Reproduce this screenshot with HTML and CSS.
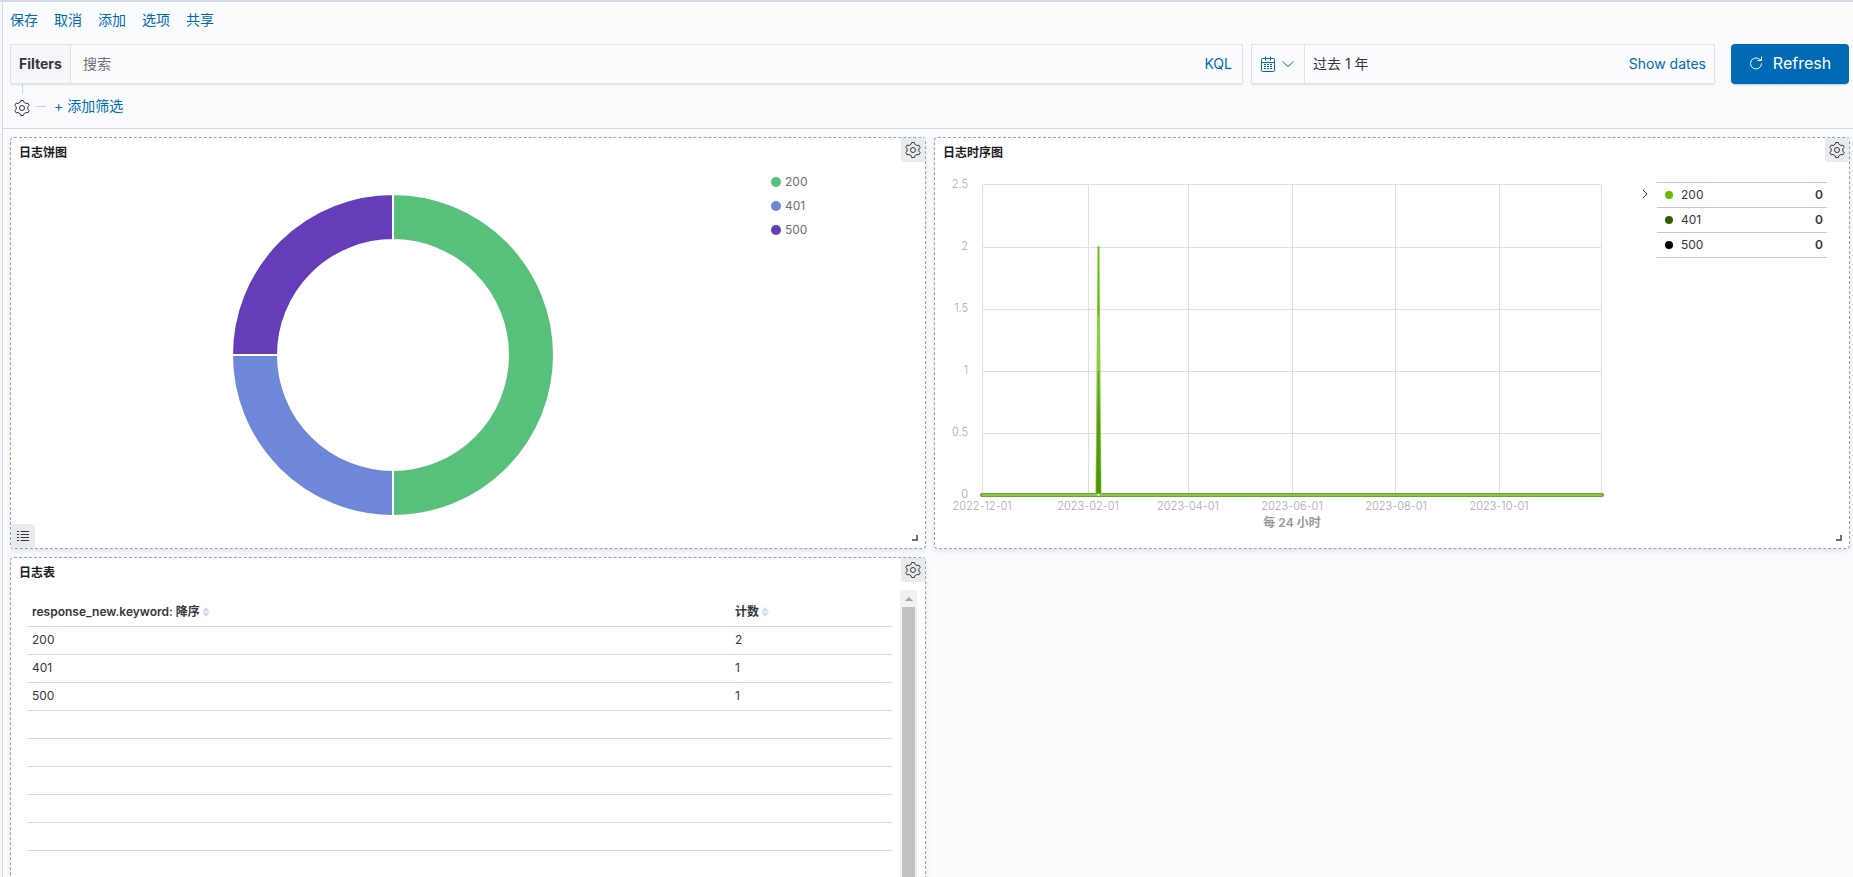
FILE: index.html
```html
<!DOCTYPE html>
<html lang="zh-CN">
<head>
<meta charset="utf-8">
<title>日志仪表板</title>
<link rel="stylesheet" href="styles.css">
</head>
<body>
<svg class="sprite" aria-hidden="true">
  <symbol id="gear" viewBox="-8 -8 16 16">
    <path d="M-1.9-5.7-1.3-7.5H1.3L1.9-5.7Q2.9-5.3 3.9-4.45L5.85-4.88 7.15-2.62 5.8-1.15Q6 0 5.8 1.15L7.15 2.62 5.85 4.88 3.9 4.45Q2.9 5.3 1.9 5.7L1.3 7.5H-1.3L-1.9 5.7Q-2.9 5.3-3.9 4.45L-5.85 4.88-7.15 2.62-5.8 1.15Q-6 0-5.8-1.15L-7.15-2.62-5.85-4.88-3.9-4.45Q-2.9-5.3-1.9-5.7Z"/>
    <circle r="2.5"/>
  </symbol>
</svg>
<div class="app">
  <div class="rail"></div>
  <main class="main">
    <header class="top">
      <nav class="menu">
        <button>保存</button><button>取消</button><button>添加</button><button>选项</button><button>共享</button>
      </nav>
      <div class="query-row">
        <div class="query">
          <button class="filters-btn">Filters</button>
          <input class="search" type="text" placeholder="搜索" aria-label="搜索">
          <button class="kql">KQL</button>
        </div>
        <div class="dates">
          <button class="quick" aria-label="日期快速选择">
            <svg class="stroke" width="14" height="16" viewBox="0 0 14 16"><rect x="0.5" y="2.5" width="13" height="13" rx="1"/><path d="M.5 6.500h13M4.500.5v4M9.500.5v4"/><path d="M3 8.500h8M3 10.500h8M3 12.500h8" stroke-dasharray="2 1"/></svg>
            <svg class="stroke" width="14" height="14" viewBox="0 0 14 14"><path d="M1.500 4.500 7 9.500l5.500-5"/></svg>
          </button>
          <button class="range">过去 1 年</button>
          <button class="show-dates">Show dates</button>
        </div>
        <button class="refresh">
          <svg class="stroke" width="14" height="14" viewBox="0 0 14 14"><path d="M12.500 7.500A5.500 5.500 0 1 1 10.500 3.200L12.500 4.500M12.500.5v4h-4"/></svg>
          Refresh
        </button>
      </div>
      <div class="filter-row">
        <div class="filter-options"><button class="gear" aria-label="筛选选项"><svg class="stroke" width="16" height="16"><use href="#gear"/></svg></button></div>
        <span class="dash"></span>
        <button class="add-filter">+ 添加筛选</button>
      </div>
    </header>

    <div class="grid">
      <section class="panel">
        <h2>日志饼图</h2>
        <button class="gear panel-gear" aria-label="面板选项"><svg class="stroke" width="16" height="16"><use href="#gear"/></svg></button>
        <div class="panel-body">
          <svg class="chart" viewBox="0 0 756 378" role="img" aria-label="日志饼图">
            <g class="slices">
              <path fill="#57c17b" d="M382 28A161 161 0 0 1 382 350V304A115 115 0 0 0 382 74Z"/>
              <path fill="#6f87d8" d="M382 350A161 161 0 0 1 221 189H267A115 115 0 0 0 382 304Z"/>
              <path fill="#663db8" d="M221 189A161 161 0 0 1 382 28V74A115 115 0 0 0 267 189Z"/>
            </g>
          </svg>
          <ul class="pie-legend">
            <li><i class="dot c-green"></i>200</li>
            <li><i class="dot c-blue"></i>401</li>
            <li><i class="dot c-purple"></i>500</li>
          </ul>
        </div>
        <button class="list-toggle" aria-label="切换图例"><svg class="stroke" width="14" height="14" viewBox="0 0 14 14"><path d="M1 2.500h2M4.500 2.500h8.500M1 5.500h2M4.500 5.500h8.500M1 8.500h2M4.500 8.500h8.500M1 11.500h2M4.500 11.500h8.500"/></svg></button>
        <span class="resize"></span>
      </section>

      <section class="panel">
        <h2>日志时序图</h2>
        <button class="gear panel-gear" aria-label="面板选项"><svg class="stroke" width="16" height="16"><use href="#gear"/></svg></button>
        <div class="panel-body">
          <svg class="chart" viewBox="0 0 700 378" role="img" aria-label="日志时序图">
            <path class="gridlines" d="M47.500 18.500H666.500M47.500 81.500H666.500M47.500 143.500H666.500M47.500 205.500H666.500M47.500 267.500H666.500M47.500 18.500V328M153.500 18.500V328M253.500 18.500V328M357.500 18.500V328M460.500 18.500V328M564.500 18.500V328M666.500 18.500V328"/>
            <g class="axis y-axis">
              <text x="33" y="22">2.5</text><text x="33" y="84">2</text><text x="33" y="146">1.5</text><text x="33" y="208">1</text><text x="33" y="270">0.5</text><text x="33" y="332">0</text>
            </g>
            <g class="axis x-axis">
              <text x="47" y="344">2022-12-01</text><text x="153" y="344">2023-02-01</text><text x="253" y="344">2023-04-01</text><text x="357" y="344">2023-06-01</text><text x="461" y="344">2023-08-01</text><text x="564" y="344">2023-10-01</text>
              <text class="axis-title" x="357" y="361">每 24 小时</text>
            </g>
            <path d="M47 329H667" stroke="#6f9f3c" stroke-width="4" stroke-linecap="round"/>
            <path d="M47 329H667" stroke="#88c940" stroke-width="2"/>
            <path d="M161.500 328 163.500 82 165.500 328Z" fill="#8ccc45" stroke="#8ccc45" stroke-width="2" stroke-linejoin="round"/>
            <path d="M163.500 82V150" stroke="#68bc00"/>
            <path d="M161.500 327 163.500 205 165.500 327Z" fill="#4d940b" stroke="#5aa012" stroke-linejoin="round"/>
            <circle cx="163.500" cy="81.500" r="1.500" fill="#8ccc45"/>
            <circle cx="163.500" cy="329" r="1" fill="#fff"/>
          </svg>
          <div class="series">
            <button class="collapse" aria-label="折叠图例"><svg class="stroke" width="8" height="10" viewBox="0 0 8 10"><path d="M2 1l4 4-4 4"/></svg></button>
            <ul class="series-list">
              <li><i class="dot small c-lime"></i><span>200</span><b>0</b></li>
              <li><i class="dot small c-forest"></i><span>401</span><b>0</b></li>
              <li><i class="dot small c-black"></i><span>500</span><b>0</b></li>
            </ul>
          </div>
        </div>
        <span class="resize"></span>
      </section>

      <section class="panel">
        <h2>日志表</h2>
        <button class="gear panel-gear" aria-label="面板选项"><svg class="stroke" width="16" height="16"><use href="#gear"/></svg></button>
        <div class="panel-body table-body">
          <table>
            <colgroup><col class="col-key"><col></colgroup>
            <thead><tr>
              <th>response_new.keyword: 降序<svg class="sort" width="8" height="10" viewBox="0 0 8 10"><path d="M4 0 8 4.500H0ZM0 5.500H8L4 10Z"/></svg></th>
              <th>计数<svg class="sort" width="8" height="10" viewBox="0 0 8 10"><path d="M4 0 8 4.500H0ZM0 5.500H8L4 10Z"/></svg></th>
            </tr></thead>
            <tbody>
              <tr><td>200</td><td>2</td></tr>
              <tr><td>401</td><td>1</td></tr>
              <tr><td>500</td><td>1</td></tr>
              <tr><td></td><td></td></tr>
              <tr><td></td><td></td></tr>
              <tr><td></td><td></td></tr>
              <tr><td></td><td></td></tr>
              <tr><td></td><td></td></tr>
              <tr><td></td><td></td></tr>
              <tr><td></td><td></td></tr>
            </tbody>
          </table>
          <div class="scrollbar"><span class="arrow"></span><span class="thumb"></span></div>
        </div>
      </section>
    </div>
  </main>
</div>
</body>
</html>
```
FILE: styles.css
```css
* { box-sizing: border-box; }
body {
  margin: 0;
  height: 100vh;
  overflow: hidden;
  background: #fafbfd;
  color: #343741;
  font: 14px/20px Inter, "Noto Sans CJK SC", sans-serif;
}
button {
  padding: 0;
  border: 0;
  background: none;
  color: #006bb4;
  font: inherit;
  white-space: nowrap;
}
ul { margin: 0; padding: 0; list-style: none; }
svg { display: block; }
.sprite { position: absolute; width: 0; height: 0; }
.stroke { fill: none; stroke: currentColor; stroke-linejoin: round; }

.app { display: flex; height: 100%; border-top: 2px solid #d3dae6; overflow: hidden; }
.rail { flex: none; width: 3px; border-right: 1px solid #d3dae6; background: #f5f7fa; }
.main { flex: 1; min-width: 0; }

.top { padding: 8px 4px 0 7px; border-bottom: 1px solid #d3dae6; }
.menu { display: flex; gap: 16px; }
.query-row { display: flex; gap: 8px; margin-top: 14px; }
.query, .dates {
  display: flex;
  align-items: stretch;
  height: 40px;
  border: 1px solid #dfe1e6;
  background: #fbfcfd;
  box-shadow: 0 2px 2px -1px rgba(152, 162, 179, 0.3);
}
.query { flex: 1; min-width: 0; }
.filters-btn {
  padding: 0 8px;
  border-right: 1px solid #dfe1e6;
  background: #f5f7fa;
  color: #343741;
  font-weight: 700;
}
.search {
  flex: 1;
  min-width: 0;
  padding: 0 12px;
  border: 0;
  background: none;
  color: #343741;
  font: inherit;
}
.search::placeholder { color: #69707d; opacity: 1; }
.kql { padding: 0 10px; }
.dates { width: 464px; }
.quick {
  display: flex;
  align-items: center;
  gap: 6px;
  width: 53px;
  padding-left: 9px;
  border-right: 1px solid #dfe1e6;
}
.range { flex: 1; padding-left: 8px; color: #343741; text-align: left; }
.show-dates { padding-right: 8px; }
.refresh {
  display: flex;
  align-items: center;
  justify-content: center;
  gap: 10px;
  width: 118px;
  height: 40px;
  margin-left: 8px;
  padding-bottom: 2px;
  border-radius: 4px;
  background: #006bb4;
  color: #fff;
  font-size: 16px;
  box-shadow: 0 2px 2px -1px rgba(54, 97, 126, 0.3);
}

.filter-row { display: flex; align-items: center; height: 44px; padding-left: 4px; }
.filter-options {
  display: flex;
  flex-direction: column;
  align-items: center;
  align-self: stretch;
}
.filter-options::before {
  content: "";
  width: 1px;
  height: 10px;
  margin-bottom: 6px;
  background: #c9d2e0;
}
.gear { display: flex; align-items: center; justify-content: center; color: #343741; }
.dash { width: 10px; height: 1px; margin: 0 8px 0 6px; background: #c9d2e0; }

.grid {
  display: grid;
  grid-template-columns: 1fr 1fr;
  grid-auto-rows: minmax(412px, auto);
  gap: 8px;
  padding: 8px 3px 8px 7px;
}
.panel {
  position: relative;
  display: flex;
  flex-direction: column;
  min-width: 0;
  border: 1px dashed #98a2b3;
  border-radius: 4px;
  background: #fff;
  box-shadow: 0 2px 4px rgba(152, 162, 179, 0.25);
}
.panel h2 {
  margin: 0;
  padding: 2px 8px 0;
  color: #1a1c21;
  font-size: 12px;
  font-weight: 700;
  line-height: 26px;
}
.panel-gear {
  position: absolute;
  top: 0;
  right: 0;
  width: 24px;
  height: 24px;
  border-radius: 0 0 0 4px;
  background: #e9eaec;
}
.list-toggle {
  position: absolute;
  left: 0;
  bottom: 0;
  display: grid;
  place-items: center;
  width: 24px;
  height: 24px;
  border-radius: 0 4px 0 0;
  background: #e9eaec;
  color: #343741;
}
.resize {
  position: absolute;
  right: 7px;
  bottom: 7px;
  width: 6px;
  height: 6px;
  border-right: 2px solid #69707d;
  border-bottom: 2px solid #69707d;
}
.panel-body { display: flex; align-items: flex-start; flex: 1; min-height: 0; }
.chart { flex: 1; min-width: 0; }
.slices path { stroke: #fff; stroke-width: 2; }

.dot { width: 10px; height: 10px; border-radius: 50%; }
.dot.small { width: 8px; height: 8px; }
.c-green { background: #57c17b; }
.c-blue { background: #6f87d8; }
.c-purple { background: #663db8; }
.c-lime { background: #68bc00; }
.c-forest { background: #345e00; }
.c-black { background: #000; }

.pie-legend {
  flex: none;
  width: 158px;
  padding: 4px;
  color: #69707d;
  font-size: 12px;
  line-height: 24px;
}
.pie-legend li { display: flex; align-items: center; gap: 4px; }

.gridlines { fill: none; stroke: #dedfe3; }
.axis text { fill: #a8a8a8; font-size: 11px; font-weight: 300; }
.y-axis { text-anchor: end; }
.x-axis { text-anchor: middle; }
.axis .axis-title { fill: #999; font-size: 12px; font-weight: 600; }

.series {
  display: flex;
  align-items: flex-start;
  flex: none;
  gap: 8px;
  width: 214px;
  padding: 16px 22px 0 6px;
}
.collapse { margin-top: 7px; color: #343741; }
.series-list { flex: 1; border-top: 1px solid #c8c8c8; font-size: 12px; line-height: 24px; }
.series-list li {
  display: flex;
  align-items: center;
  gap: 8px;
  padding: 0 4px 0 8px;
  border-bottom: 1px solid #c8c8c8;
}
.series-list span { flex: 1; }
.series-list b { font-weight: 600; }

.table-body { padding: 4px 8px 0 16px; gap: 8px; align-items: stretch; }
table {
  flex: 1;
  align-self: flex-start;
  border-collapse: collapse;
  table-layout: fixed;
  font-size: 12px;
  line-height: 16px;
}
.col-key { width: 703px; }
th, td { height: 28px; padding: 0 5px; border-bottom: 1px solid #d3dae6; text-align: left; }
th { height: 36px; padding-top: 8px; font-weight: 600; }
.sort { display: inline-block; margin-left: 2px; vertical-align: -1px; fill: #d3dae6; }
.scrollbar {
  display: flex;
  flex-direction: column;
  align-items: center;
  width: 17px;
  background: #f1f1f1;
}
.arrow {
  margin: 7px 0 6px;
  border: 4px solid transparent;
  border-top: 0;
  border-bottom-color: #a3a3a3;
}
.thumb { flex: 1; width: 13px; background: #c1c1c1; }
```
